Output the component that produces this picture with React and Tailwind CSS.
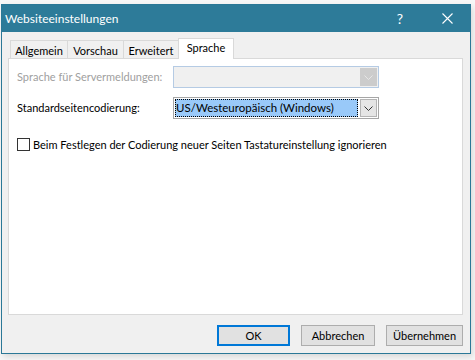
import { useState } from "react"

function Chevron({ color }) {
    return (
        <svg width="9" height="5" viewBox="0 0 9 5" fill="none">
            <path d="M0.5 0.5 L4.5 4.5 L8.5 0.5" stroke={color} strokeWidth="1" />
        </svg>
    )
}

export default function App() {
    const [ignore, setIgnore] = useState(false)
    const tabs = [
        { label: "Allgemein", w: "w-[57px]" },
        { label: "Vorschau", w: "w-[56px]" },
        { label: "Erweitert", w: "w-[55px]" },
    ]

    return (
        <div className="w-[475px] h-[360px] bg-[#f7f7f7] pt-[4px] pl-[1px] text-[11px] text-black"
            style={{ fontFamily: 'Lato, "Liberation Sans", sans-serif' }}>
            <div className="w-[470px] h-[350px] border border-[#2b7897] bg-[#f0f0f0] flex flex-col shadow-[2px_3px_6px_rgba(0,0,0,0.12)]">
                {/* title bar */}
                <div className="h-[27px] bg-[#2d7b99] flex items-center text-white">
                    <span className="pl-[3px] flex-1 leading-none text-[12px]">Websiteeinstellungen</span>
                    <span className="w-[44px] text-center leading-none mr-[2px] text-[14px]">?</span>
                    <span className="w-[46px] h-[27px] flex items-center justify-center">
                        <svg width="11" height="11" viewBox="0 0 11 11">
                            <path d="M0.5 0.5 L10.5 10.5 M10.5 0.5 L0.5 10.5" stroke="#ffffff" strokeWidth="1.1" />
                        </svg>
                    </span>
                </div>

                <div className="flex-1 flex flex-col pl-[6px] pr-[7px] pt-[5px]">
                    {/* tabs */}
                    <div className="flex items-end h-[21px] pl-[2px]">
                        {tabs.map(t => (
                            <div key={t.label}
                                className={`${t.w} h-[18px] border-t border-l border-[#d9d9d9] bg-[#f0f0f0] flex items-center justify-center leading-none pt-[1px]`}>
                                {t.label}
                            </div>
                        ))}
                        <div className="relative z-10 w-[56px] h-[21px] -mb-[1px] border-t border-l border-r border-[#d9d9d9] bg-white flex items-center justify-center leading-none pb-[3px]">
                            Sprache
                        </div>
                    </div>

                    {/* panel */}
                    <div className="h-[257px] border border-[#d9d9d9] bg-white pl-[8px] pt-[7px]">
                        <div className="flex items-center h-[22px]">
                            <span className="w-[156px] text-[#a0a0a0] whitespace-nowrap">Sprache für Servermeldungen:</span>
                            <div className="w-[206px] h-[22px] border border-[#b5cbe4] bg-[#f0f0f0] flex justify-end p-[1px]">
                                <div className="w-[17px] h-full bg-[#cccccc] flex items-center justify-center">
                                    <Chevron color="#e6e6e6" />
                                </div>
                            </div>
                        </div>

                        <div className="flex items-center h-[22px] mt-[9px]">
                            <span className="w-[156px] whitespace-nowrap">Standardseitencodierung:</span>
                            <div className="w-[206px] h-[22px] border border-[#a6a6a6] bg-white flex p-[1px] gap-[2px]">
                                <div className="flex-1 bg-[#99c9f9] border border-dotted border-black flex items-center leading-none text-[11.5px]">
                                    US/Westeuropäisch (Windows)
                                </div>
                                <div className="w-[17px] h-full bg-[#e5e5e5] border border-[#b4b4b4] flex items-center justify-center">
                                    <Chevron color="#333333" />
                                </div>
                            </div>
                        </div>

                        <label className="flex items-center mt-[18px] h-[14px] cursor-default">
                            <button type="button" onClick={() => setIgnore(!ignore)}
                                className="w-[13px] h-[13px] border border-[#333333] bg-white flex items-center justify-center">
                                {ignore && (
                                    <svg width="9" height="9" viewBox="0 0 9 9">
                                        <path d="M1 4.5 L3.5 7 L8 1.5" stroke="#000" strokeWidth="1.3" fill="none" />
                                    </svg>
                                )}
                            </button>
                            <span className="ml-[3px] leading-none whitespace-nowrap">Beim Festlegen der Codierung neuer Seiten Tastatureinstellung ignorieren</span>
                        </label>
                    </div>

                    {/* buttons */}
                    <div className="flex justify-end gap-[11px] mt-[10px]">
                        <button className="w-[73px] h-[21px] bg-[#e1e1e1] border-2 border-[#0078d7] leading-none">OK</button>
                        <button className="w-[74px] h-[21px] bg-[#e1e1e1] border border-[#adadad] leading-none">Abbrechen</button>
                        <button className="w-[77px] h-[21px] bg-[#e1e1e1] border border-[#adadad] leading-none">Übernehmen</button>
                    </div>
                </div>
            </div>
        </div>
    )
}
